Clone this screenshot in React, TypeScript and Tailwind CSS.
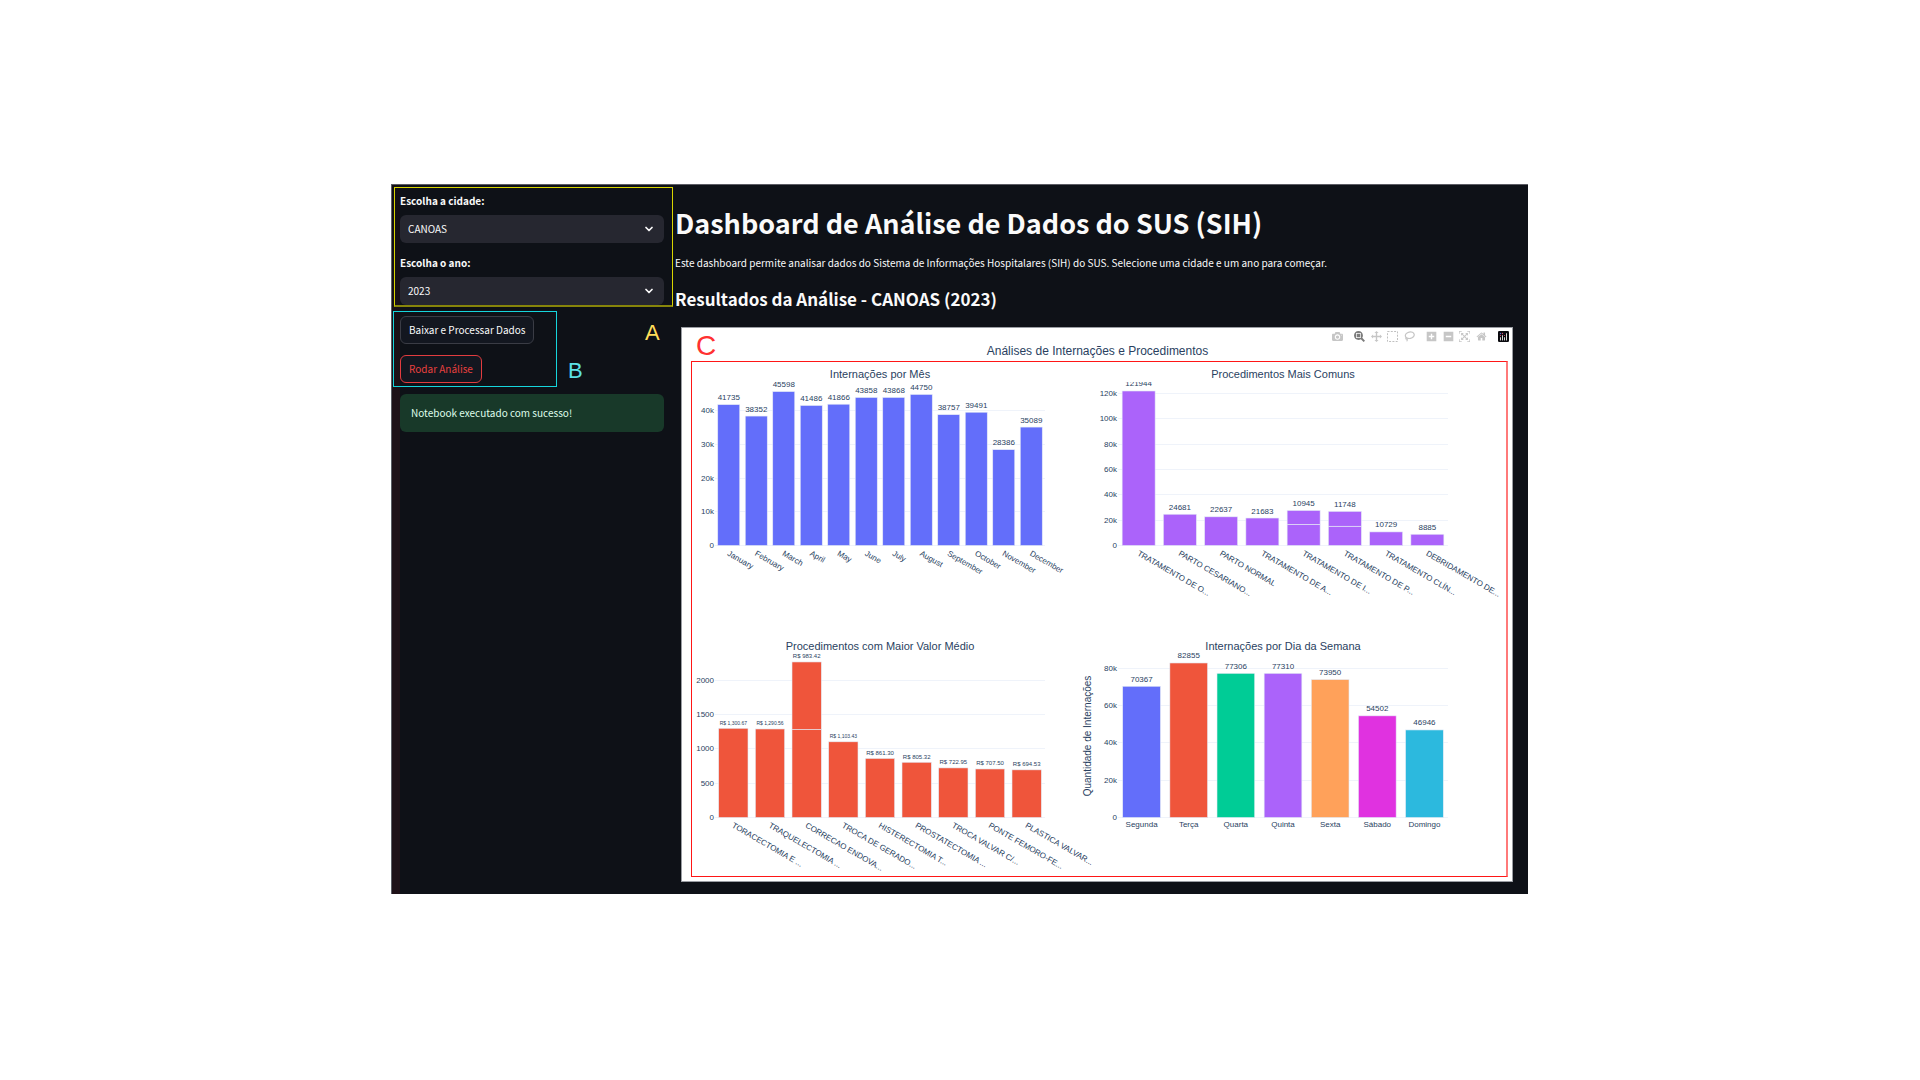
import React from "react";
import { ChevronDown } from "lucide-react";

type Bar = { name: string; label: string; parts: number[]; color?: string; small?: boolean };

type ChartProps = {
  title: string;
  x0: number;
  clipTop: number;
  labelGap: number;
  height: number;
  color: string;
  bars: Bar[];
  ticks: { value: number; text: string }[];
  unit: number;
  tilted?: boolean;
  axisTitle?: string;
  valueSize: number;
};

const PLOT_WIDTH = 330;
const BASE = 183;

function BarChart({
  title,
  x0,
  clipTop,
  labelGap,
  height,
  color,
  bars,
  ticks,
  unit,
  tilted,
  axisTitle,
  valueSize,
}: ChartProps) {
  const step = PLOT_WIDTH / bars.length;
  const barWidth = step * 0.8;
  const clipId = "plot-" + title.replace(/[^A-Za-z]/g, "");
  return (
    <svg viewBox={`0 0 407 ${height}`} className="block w-full overflow-visible" role="img" aria-label={title} fill="#2a3f5f">
      <defs>
        <clipPath id={clipId}>
          <rect x={x0} y={clipTop} width={PLOT_WIDTH} height={BASE + 1 - clipTop} />
        </clipPath>
      </defs>
      <text x={x0 + PLOT_WIDTH / 2} y={16} textAnchor="middle" fontSize={11}>
        {title}
      </text>
      {ticks.map((t) => (
        <g key={t.text}>
          <rect x={x0} y={Math.round(BASE - t.value * unit)} width={PLOT_WIDTH} height={1} fill="#eff3fa" />
          <text x={x0 - 1} y={Math.round(BASE - t.value * unit) + 3} textAnchor="end" fontSize={8}>
            {t.text}
          </text>
        </g>
      ))}
      <g clipPath={`url(#${clipId})`}>
        {bars.map((b, i) => {
          const cx = x0 + step * (i + 0.5);
          const total = b.parts.reduce((a, c) => a + c, 0);
          let sum = 0;
          return (
            <g key={b.name}>
              {b.parts.map((p, k) => {
                sum += p;
                return (
                  <rect
                    key={k}
                    x={cx - barWidth / 2}
                    y={BASE + 0.5 - sum * unit}
                    width={barWidth}
                    height={p * unit}
                    fill={b.color ?? color}
                    stroke="#e5ecf6"
                    strokeWidth={0.6}
                  />
                );
              })}
              <text x={cx} y={BASE - total * unit - labelGap} textAnchor="middle" fontSize={b.small ? 5 : valueSize}>
                {b.label}
              </text>
            </g>
          );
        })}
      </g>
      {bars.map((b, i) => {
        const cx = x0 + step * (i + 0.5);
        return tilted ? (
          <text key={b.name} transform={`translate(${cx - 2} ${BASE + 10}) rotate(30)`} fontSize={8}>
            {b.name}
          </text>
        ) : (
          <text key={b.name} x={cx} y={BASE + 10} textAnchor="middle" fontSize={8}>
            {b.name}
          </text>
        );
      })}
      {axisTitle && (
        <text transform="translate(-8 102) rotate(-90)" textAnchor="middle" fontSize={10}>
          {axisTitle}
        </text>
      )}
    </svg>
  );
}

const one = (name: string, value: number, color?: string): Bar => ({ name, label: String(value), parts: [value], color });

const months: Bar[] = [
  one("January", 41735),
  one("February", 38352),
  one("March", 45598),
  one("April", 41486),
  one("May", 41866),
  one("June", 43858),
  one("July", 43868),
  one("August", 44750),
  one("September", 38757),
  one("October", 39491),
  one("November", 28386),
  one("December", 35089),
];

const common: Bar[] = [
  one("TRATAMENTO DE O...", 121944),
  one("PARTO CESARIANO...", 24681),
  one("PARTO NORMAL", 22637),
  one("TRATAMENTO DE A...", 21683),
  { name: "TRATAMENTO DE I...", label: "10945", parts: [16700, 10945] },
  { name: "TRATAMENTO DE P...", label: "11748", parts: [15200, 11748] },
  one("TRATAMENTO CLÍN...", 10729),
  one("DEBRIDAMENTO DE...", 8885),
];

const money = (name: string, label: string, parts: number[], small?: boolean): Bar => ({ name, label, parts, small });

const costly: Bar[] = [
  money("TORACECTOMIA E ...", "R$ 1,300.67", [1300.67], true),
  money("TRAQUELECTOMIA ...", "R$ 1,290.56", [1290.56], true),
  money("CORRECAO ENDOVA...", "R$ 983.42", [1284, 983.42]),
  money("TROCA DE GERADO...", "R$ 1,103.43", [1103.43], true),
  money("HISTERECTOMIA T...", "R$ 861.30", [861.3]),
  money("PROSTATECTOMIA ...", "R$ 805.32", [805.32]),
  money("TROCA VALVAR C/...", "R$ 722.95", [722.95]),
  money("PONTE FEMORO-FE...", "R$ 707.50", [707.5]),
  money("PLASTICA VALVAR...", "R$ 694.53", [694.53]),
];

const weekdays: Bar[] = [
  one("Segunda", 70367, "#636efa"),
  one("Terça", 82855, "#ef553b"),
  one("Quarta", 77306, "#00cc96"),
  one("Quinta", 77310, "#ab63fa"),
  one("Sexta", 73950, "#ffa15a"),
  one("Sábado", 54502, "#e032e0"),
  one("Domingo", 46946, "#2cb9de"),
];

const thousands = (values: number[]) => values.map((v) => ({ value: v * 1000, text: v === 0 ? "0" : `${v}k` }));

function Tool({ label, d, width = 1000, active }: { label: string; d: string; width?: number; active?: boolean }) {
  return (
    <button type="button" aria-label={label} className={active ? "block text-[#7c7c7c]" : "block text-[#c6c6c6]"}>
      <svg viewBox={`0 0 ${width} 1000`} className="block size-[11px]" fill="currentColor">
        <path transform="matrix(1 0 0 -1 0 850)" d={d} />
      </svg>
    </button>
  );
}

const CAMERA =
  "m500 450c-83 0-150-67-150-150 0-83 67-150 150-150 83 0 150 67 150 150 0 83-67 150-150 150z m400 150h-120c-16 0-34 13-39 29l-31 93c-6 15-23 28-40 28h-340c-16 0-34-13-39-28l-31-94c-6-15-23-28-40-28h-120c-55 0-100-45-100-100v-450c0-55 45-100 100-100h800c55 0 100 45 100 100v450c0 55-45 100-100 100z m-400-550c-138 0-250 112-250 250 0 138 112 250 250 250 138 0 250-112 250-250 0-138-112-250-250-250z m365 380c-19 0-35 16-35 35 0 19 16 35 35 35 19 0 35-16 35-35 0-19-16-35-35-35z";
const ZOOM =
  "m1000-25l-250 251c40 63 63 138 63 218 0 224-182 406-407 406-224 0-406-182-406-406s183-406 407-406c80 0 155 22 218 62l250-250 125 125z m-812 250l0 438 437 0 0-438-437 0z m62 375l313 0 0-312-313 0 0 312z";
const PAN =
  "m1000 350l-187 188 0-125-250 0 0 250 125 0-188 187-187-187 125 0 0-250-250 0 0 125-188-188 186-187 0 125 252 0 0-250-125 0 187-188 188 188-125 0 0 250 250 0 0-126 187 188z";
const PLUS =
  "m1 787l0-875 875 0 0 875-875 0z m687-500l-187 0 0-187-125 0 0 187-188 0 0 125 188 0 0 187 125 0 0-187 187 0 0-125z";
const MINUS = "m0 788l0-876 875 0 0 876-875 0z m688-500l-500 0 0 125 500 0 0-125z";
const AUTOSCALE =
  "m250 850l-187 0-63 0 0-62 0-188 63 0 0 188 187 0 0 62z m688 0l-188 0 0-62 188 0 0-188 62 0 0 188 0 62-62 0z m-875-938l0 188-63 0 0-188 0-62 63 0 187 0 0 62-187 0z m875 188l0-188-188 0 0-62 188 0 62 0 0 62 0 188-62 0z m-125 188l-1 0-93-94-156 156 156 156 92-93 2 0 0 250-250 0 0-2 93-92-156-156-156 156 94 92 0 2-250 0 0-250 0 0 93 93 157-156-157-156-93 94 0 0 0-250 250 0 0 0-94 93 156 157 156-157-93-93 0 0 250 0 0 250z";
const HOME =
  "m786 296v-267q0-15-11-26t-25-10h-214v214h-143v-214h-214q-15 0-25 10t-11 26v267q0 1 0 2t0 2l321 264 321-264q1-1 1-4z m124 39l-34-41q-5-5-12-6h-2q-7 0-12 3l-386 322-386-322q-7-4-13-4-7 2-12 7l-35 41q-4 5-3 13t6 12l401 334q18 15 42 15t43-15l136-114v109q0 8 5 13t13 5h107q8 0 13-5t5-13v-227l122-102q5-5 6-12t-4-13z";

function ModeBar() {
  return (
    <div className="flex h-[11px] items-center justify-end gap-[11px] pr-[3px]">
      <Tool label="Download plot as a png" d={CAMERA} />
      <div className="flex w-[61px] justify-between">
        <Tool label="Zoom" d={ZOOM} active />
        <Tool label="Pan" d={PAN} />
        <button type="button" aria-label="Box Select" className="block text-[#c0c0c0]">
          <svg viewBox="0 0 11 11" className="block size-[11px]" fill="none" stroke="currentColor">
            <rect x="0.5" y="0.5" width="10" height="10" strokeDasharray="2 1.3" />
          </svg>
        </button>
        <button type="button" aria-label="Lasso Select" className="block text-[#c6c6c6]">
          <svg viewBox="0 0 11 11" className="block size-[11px]" fill="none" stroke="currentColor" strokeWidth="1.2">
            <ellipse cx="5.8" cy="4.2" rx="4.5" ry="3.2" transform="rotate(-12 5.8 4.2)" />
            <path d="M2.4 6.4c-1 .6-.6 1.8.4 1.6.9.4.6 1.5-.2 2.2" />
          </svg>
        </button>
      </div>
      <div className="flex w-[61px] justify-between">
        <Tool label="Zoom in" d={PLUS} width={875} />
        <Tool label="Zoom out" d={MINUS} width={875} />
        <Tool label="Autoscale" d={AUTOSCALE} />
        <Tool label="Reset axes" d={HOME} width={928} />
      </div>
      <a href="#plotly" aria-label="Produced with Plotly" className="block">
        <svg viewBox="0 0 132 132" className="block size-[11px]">
          <rect width="132" height="132" rx="14" fill="#0a0a0f" />
          <circle cx="30" cy="30" r="8" fill="#5a6fd8" />
          <circle cx="54" cy="30" r="8" fill="#d0507a" />
          <circle cx="78" cy="54" r="7" fill="#e0556a" />
          <circle cx="30" cy="54" r="8" fill="#c04a68" />
          <g fill="#d8d8d8">
            <rect x="24" y="72" width="12" height="42" rx="6" />
            <rect x="48" y="48" width="12" height="66" rx="6" />
            <rect x="72" y="72" width="12" height="42" rx="6" />
            <rect x="96" y="24" width="12" height="90" rx="6" />
          </g>
        </svg>
      </a>
    </div>
  );
}

function Picker({ id, label, options }: { id: string; label: string; options: string[] }) {
  return (
    <div className="flex flex-col gap-1.5">
      <label htmlFor={id} className="text-[10px] leading-4 font-bold">
        {label}
      </label>
      <div className="relative">
        <select id={id} className="block h-7 w-full appearance-none rounded-md bg-[#262730] px-2 text-[10px] leading-4">
          {options.map((o) => (
            <option key={o}>{o}</option>
          ))}
        </select>
        <ChevronDown className="pointer-events-none absolute top-2 right-[9px] size-3" strokeWidth={3.5} />
      </div>
    </div>
  );
}

export default function App() {
  return (
    <div className="flex min-h-screen items-center justify-center bg-white pr-px pb-0.5">
      <div className="flex w-full max-w-[1137px] border-t border-l border-[#5c5c64] bg-[#0e1117] font-['Noto_Sans_CJK_SC',sans-serif] text-[#fafafa]">
        <div className="w-2 shrink-0 bg-linear-to-b from-[#120e14] to-[#1f1118] to-30%" />
        <aside className="relative flex w-[264px] shrink-0 flex-col gap-[11px] pt-2">
          <div className="relative flex flex-col gap-3">
            <div className="pointer-events-none absolute -top-1.5 -right-[9px] -bottom-0.5 -left-1.5 border border-b-2 border-[#d8d400] border-b-[#87850a]" />
            <Picker id="cidade" label="Escolha a cidade:" options={["CANOAS"]} />
            <Picker id="ano" label="Escolha o ano:" options={["2023"]} />
          </div>
          <div className="relative flex flex-col items-start gap-[11px]">
            <div className="pointer-events-none absolute -top-[5px] -bottom-1 -left-[7px] w-[164px] border border-[#16d5dc]" />
            <button type="button" className="h-7 rounded-md border border-[#3a3c45] bg-[#131720] px-2 text-[10px] leading-4">
              Baixar e Processar Dados
            </button>
            <button type="button" className="h-7 rounded-md border border-[#e23c3f] bg-[#131720] px-2 text-[10px] leading-4 text-[#e8403f]">
              Rodar Análise
            </button>
            <span className="absolute top-[39px] left-[168px] font-['Liberation_Sans',sans-serif] text-[22px] leading-8 text-[#5ce1e6]">B</span>
            <span className="absolute top-px left-[245px] font-['Liberation_Sans',sans-serif] text-[22px] leading-8 text-[#ffde59]">A</span>
          </div>
          <div role="status" className="rounded-md bg-[#183929] px-[11px] py-[11px] text-[10px] leading-4 text-[#dffde9]">
            Notebook executado com sucesso!
          </div>
        </aside>
        <main className="min-w-0 flex-1 pt-[18px] pr-[15px] pb-3 pl-[11px]">
          <h1 className="text-[27px] leading-10 font-bold">Dashboard de Análise de Dados do SUS (SIH)</h1>
          <p className="mt-2.5 text-[10px] leading-5">
            Este dashboard permite analisar dados do Sistema de Informações Hospitalares (SIH) do SUS. Selecione uma cidade e um ano para começar.
          </p>
          <h2 className="mt-3 text-[17px] leading-7 font-bold">Resultados da Análise - CANOAS (2023)</h2>
          <figure className="relative mt-3.5 ml-1.5 border border-[#9a9da3] bg-white pt-[3px] pr-1 pb-1 pl-[9px] font-['Liberation_Sans',sans-serif] text-[#2a3f5f]">
            <span className="absolute top-0.5 left-3.5 text-[28px] leading-8 text-[#ff3131]">C</span>
            <div className="-mr-1">
              <ModeBar />
            </div>
            <figcaption className="mt-px mb-0.5 pr-1 text-center text-[12px] leading-4">Análises de Internações e Procedimentos</figcaption>
            <div className="grid grid-cols-2 border border-r-2 border-[#ff1616] border-r-[#ff7a7a]">
              <BarChart
                title="Internações por Mês"
                x0={23}
                clipTop={20}
                labelGap={4}
                height={272}
                color="#636efa"
                bars={months}
                ticks={thousands([0, 10, 20, 30, 40])}
                unit={0.003375}
                valueSize={8}
                tilted
              />
              <BarChart
                title="Procedimentos Mais Comuns"
                x0={19}
                clipTop={20}
                labelGap={4}
                height={272}
                color="#ab63fa"
                bars={common}
                ticks={thousands([0, 20, 40, 60, 80, 100, 120])}
                unit={0.001267}
                valueSize={8}
                tilted
              />
              <BarChart
                title="Procedimentos com Maior Valor Médio"
                x0={23}
                clipTop={19}
                labelGap={3}
                height={242}
                color="#ef553b"
                bars={costly}
                ticks={[0, 500, 1000, 1500, 2000].map((v) => ({ value: v, text: String(v) }))}
                unit={0.0686}
                valueSize={6}
                tilted
              />
              <BarChart
                title="Internações por Dia da Semana"
                x0={19}
                clipTop={19}
                labelGap={4}
                height={242}
                color="#636efa"
                bars={weekdays}
                ticks={thousands([0, 20, 40, 60, 80])}
                unit={0.001865}
                valueSize={8}
                axisTitle="Quantidade de Internações"
              />
            </div>
          </figure>
        </main>
      </div>
    </div>
  );
}
